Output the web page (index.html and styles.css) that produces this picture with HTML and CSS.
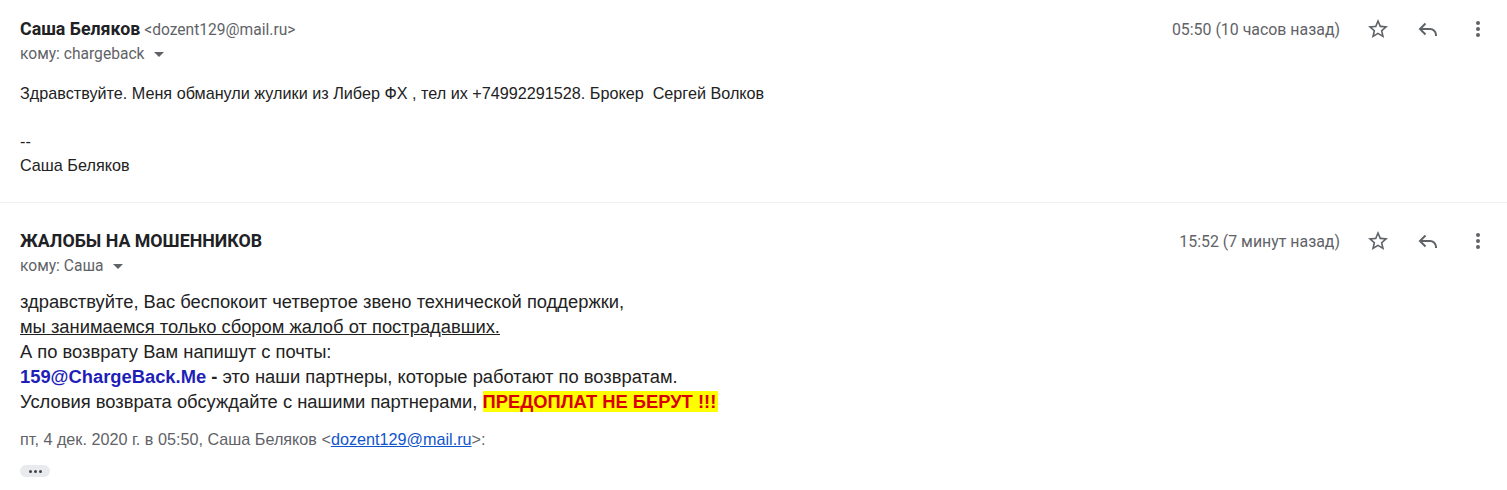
FILE: index.html
```html
<!DOCTYPE html>
<html lang="ru">
<head>
<meta charset="utf-8">
<link rel="stylesheet" href="styles.css">
</head>
<body>
<div class="thread">
  <div class="msg msg-first">
    <div class="head">
      <div class="who">
        <div class="from"><span class="name">Саша Беляков</span> <span class="addr">&lt;dozent129@mail.ru&gt;</span></div>
        <div class="to">кому: chargeback <span class="caret"></span></div>
      </div>
      <div class="meta">
        <span class="time">05:50 (10 часов назад)</span>
        <span class="ico"><svg width="24" height="24" viewBox="0 0 24 24"><path fill="#5f6368" d="M22 9.24l-7.19-.62L12 2 9.19 8.63 2 9.24l5.46 4.73L5.82 21 12 17.27 18.18 21l-1.63-7.03L22 9.24zM12 15.4l-3.76 2.27 1-4.28-3.32-2.88 4.38-.38L12 6.1l1.71 4.04 4.38.38-3.32 2.88 1 4.28L12 15.4z"/></svg></span>
        <span class="ico"><svg width="24" height="24" viewBox="0 0 24 24"><path fill="none" stroke="#5f6368" stroke-width="2" stroke-linejoin="miter" d="M9.5 6.5L4 12l5.5 5.5M4 12h10a6 6 0 0 1 6 6v1"/></svg></span>
        <span class="ico"><svg width="24" height="24" viewBox="0 0 24 24"><circle cx="12" cy="6" r="2" fill="#5f6368"/><circle cx="12" cy="12" r="2" fill="#5f6368"/><circle cx="12" cy="18" r="2" fill="#5f6368"/></svg></span>
      </div>
    </div>
    <div class="body1">
      <div>Здравствуйте. Меня обманули жулики из Либер ФХ , тел их +74992291528. Брокер&nbsp; Сергей Волков</div>
      <div><br></div>
      <div>--</div>
      <div>Саша Беляков</div>
    </div>
  </div>
  <div class="msg msg-second">
    <div class="head">
      <div class="who">
        <div class="from"><span class="name">ЖАЛОБЫ НА МОШЕННИКОВ</span></div>
        <div class="to">кому: Саша <span class="caret"></span></div>
      </div>
      <div class="meta">
        <span class="time">15:52 (7 минут назад)</span>
        <span class="ico"><svg width="24" height="24" viewBox="0 0 24 24"><path fill="#5f6368" d="M22 9.24l-7.19-.62L12 2 9.19 8.63 2 9.24l5.46 4.73L5.82 21 12 17.27 18.18 21l-1.63-7.03L22 9.24zM12 15.4l-3.76 2.27 1-4.28-3.32-2.88 4.38-.38L12 6.1l1.71 4.04 4.38.38-3.32 2.88 1 4.28L12 15.4z"/></svg></span>
        <span class="ico"><svg width="24" height="24" viewBox="0 0 24 24"><path fill="none" stroke="#5f6368" stroke-width="2" stroke-linejoin="miter" d="M9.5 6.5L4 12l5.5 5.5M4 12h10a6 6 0 0 1 6 6v1"/></svg></span>
        <span class="ico"><svg width="24" height="24" viewBox="0 0 24 24"><circle cx="12" cy="6" r="2" fill="#5f6368"/><circle cx="12" cy="12" r="2" fill="#5f6368"/><circle cx="12" cy="18" r="2" fill="#5f6368"/></svg></span>
      </div>
    </div>
    <div class="body2">
      <div>здравствуйте, Вас беспокоит четвертое звено технической поддержки,</div>
      <div><u>мы занимаемся только сбором жалоб от пострадавших.</u></div>
      <div>А по возврату Вам напишут с почты:</div>
      <div><b class="mail">159@ChargeBack.Me</b> <b>-</b> это наши партнеры, которые работают по возвратам.</div>
      <div>Условия возврата обсуждайте с нашими партнерами, <b class="warn">ПРЕДОПЛАТ НЕ БЕРУТ !!!</b></div>
    </div>
    <div class="quote">пт, 4 дек. 2020 г. в 05:50, Саша Беляков &lt;<a href="#">dozent129@mail.ru</a>&gt;:</div>
    <div class="more"><span></span><span></span><span></span></div>
  </div>
</div>
</body>
</html>
```
FILE: styles.css
```css
html, body {
  margin: 0;
  padding: 0;
  background: #fff;
}
body {
  font-family: Roboto, "Liberation Sans", Arial, sans-serif;
  color: #222;
}
.msg {
  padding-left: 20px;
  padding-right: 17px;
}
.msg-first {
  padding-top: 19px;
  padding-bottom: 25px;
  border-bottom: 1px solid #efefef;
}
.msg-second {
  padding-top: 28px;
}
.head {
  display: flex;
  justify-content: space-between;
  align-items: flex-start;
}
.from {
  line-height: 20px;
  height: 20px;
  white-space: nowrap;
}
.name {
  font-weight: 700;
  font-size: 17.8px;
  color: #202124;
}
.addr {
  font-size: 15.6px;
  color: #5f6368;
}
.to {
  margin-top: 5px;
  font-size: 15.6px;
  line-height: 20px;
  color: #5f6368;
  display: flex;
  align-items: center;
  gap: 8px;
}
.caret {
  width: 0;
  height: 0;
  border-left: 5px solid transparent;
  border-right: 5px solid transparent;
  border-top: 5px solid #5f6368;
  margin-left: 2px;
  margin-top: 1px;
}
.meta {
  display: flex;
  align-items: center;
  height: 20px;
}
.time {
  font-size: 15.9px;
  color: #5f6368;
  margin-right: 26px;
}
.ico {
  width: 24px;
  height: 24px;
  display: flex;
  align-items: center;
  justify-content: center;
  margin-left: 26px;
}
.time + .ico { margin-left: 0; }
.body1 {
  margin-top: 17px;
  font-family: "Liberation Sans", Arial, sans-serif;
  font-size: 16.2px;
  line-height: 24px;
  color: #222;
}
.body2 {
  margin-top: 13px;
  font-family: "Liberation Sans", Arial, sans-serif;
  font-size: 18.35px;
  line-height: 25px;
  color: #222;
}
.body2 u { text-decoration: underline; }
.mail { color: #1f1fb8; }
.warn {
  color: #d80000;
  background: #ffff00;
  padding-right: 2px;
}
.quote {
  margin-top: 15px;
  font-family: "Liberation Sans", Arial, sans-serif;
  font-size: 16.2px;
  line-height: 20px;
  color: #5f6368;
}
.quote a { color: #1155cc; }
.more {
  margin-top: 16px;
  width: 30px;
  height: 12px;
  border-radius: 6px;
  background: #e8eaed;
  display: flex;
  align-items: center;
  justify-content: center;
  gap: 2px;
}
.more span {
  width: 3px;
  height: 3px;
  border-radius: 50%;
  background: #444;
}
```
